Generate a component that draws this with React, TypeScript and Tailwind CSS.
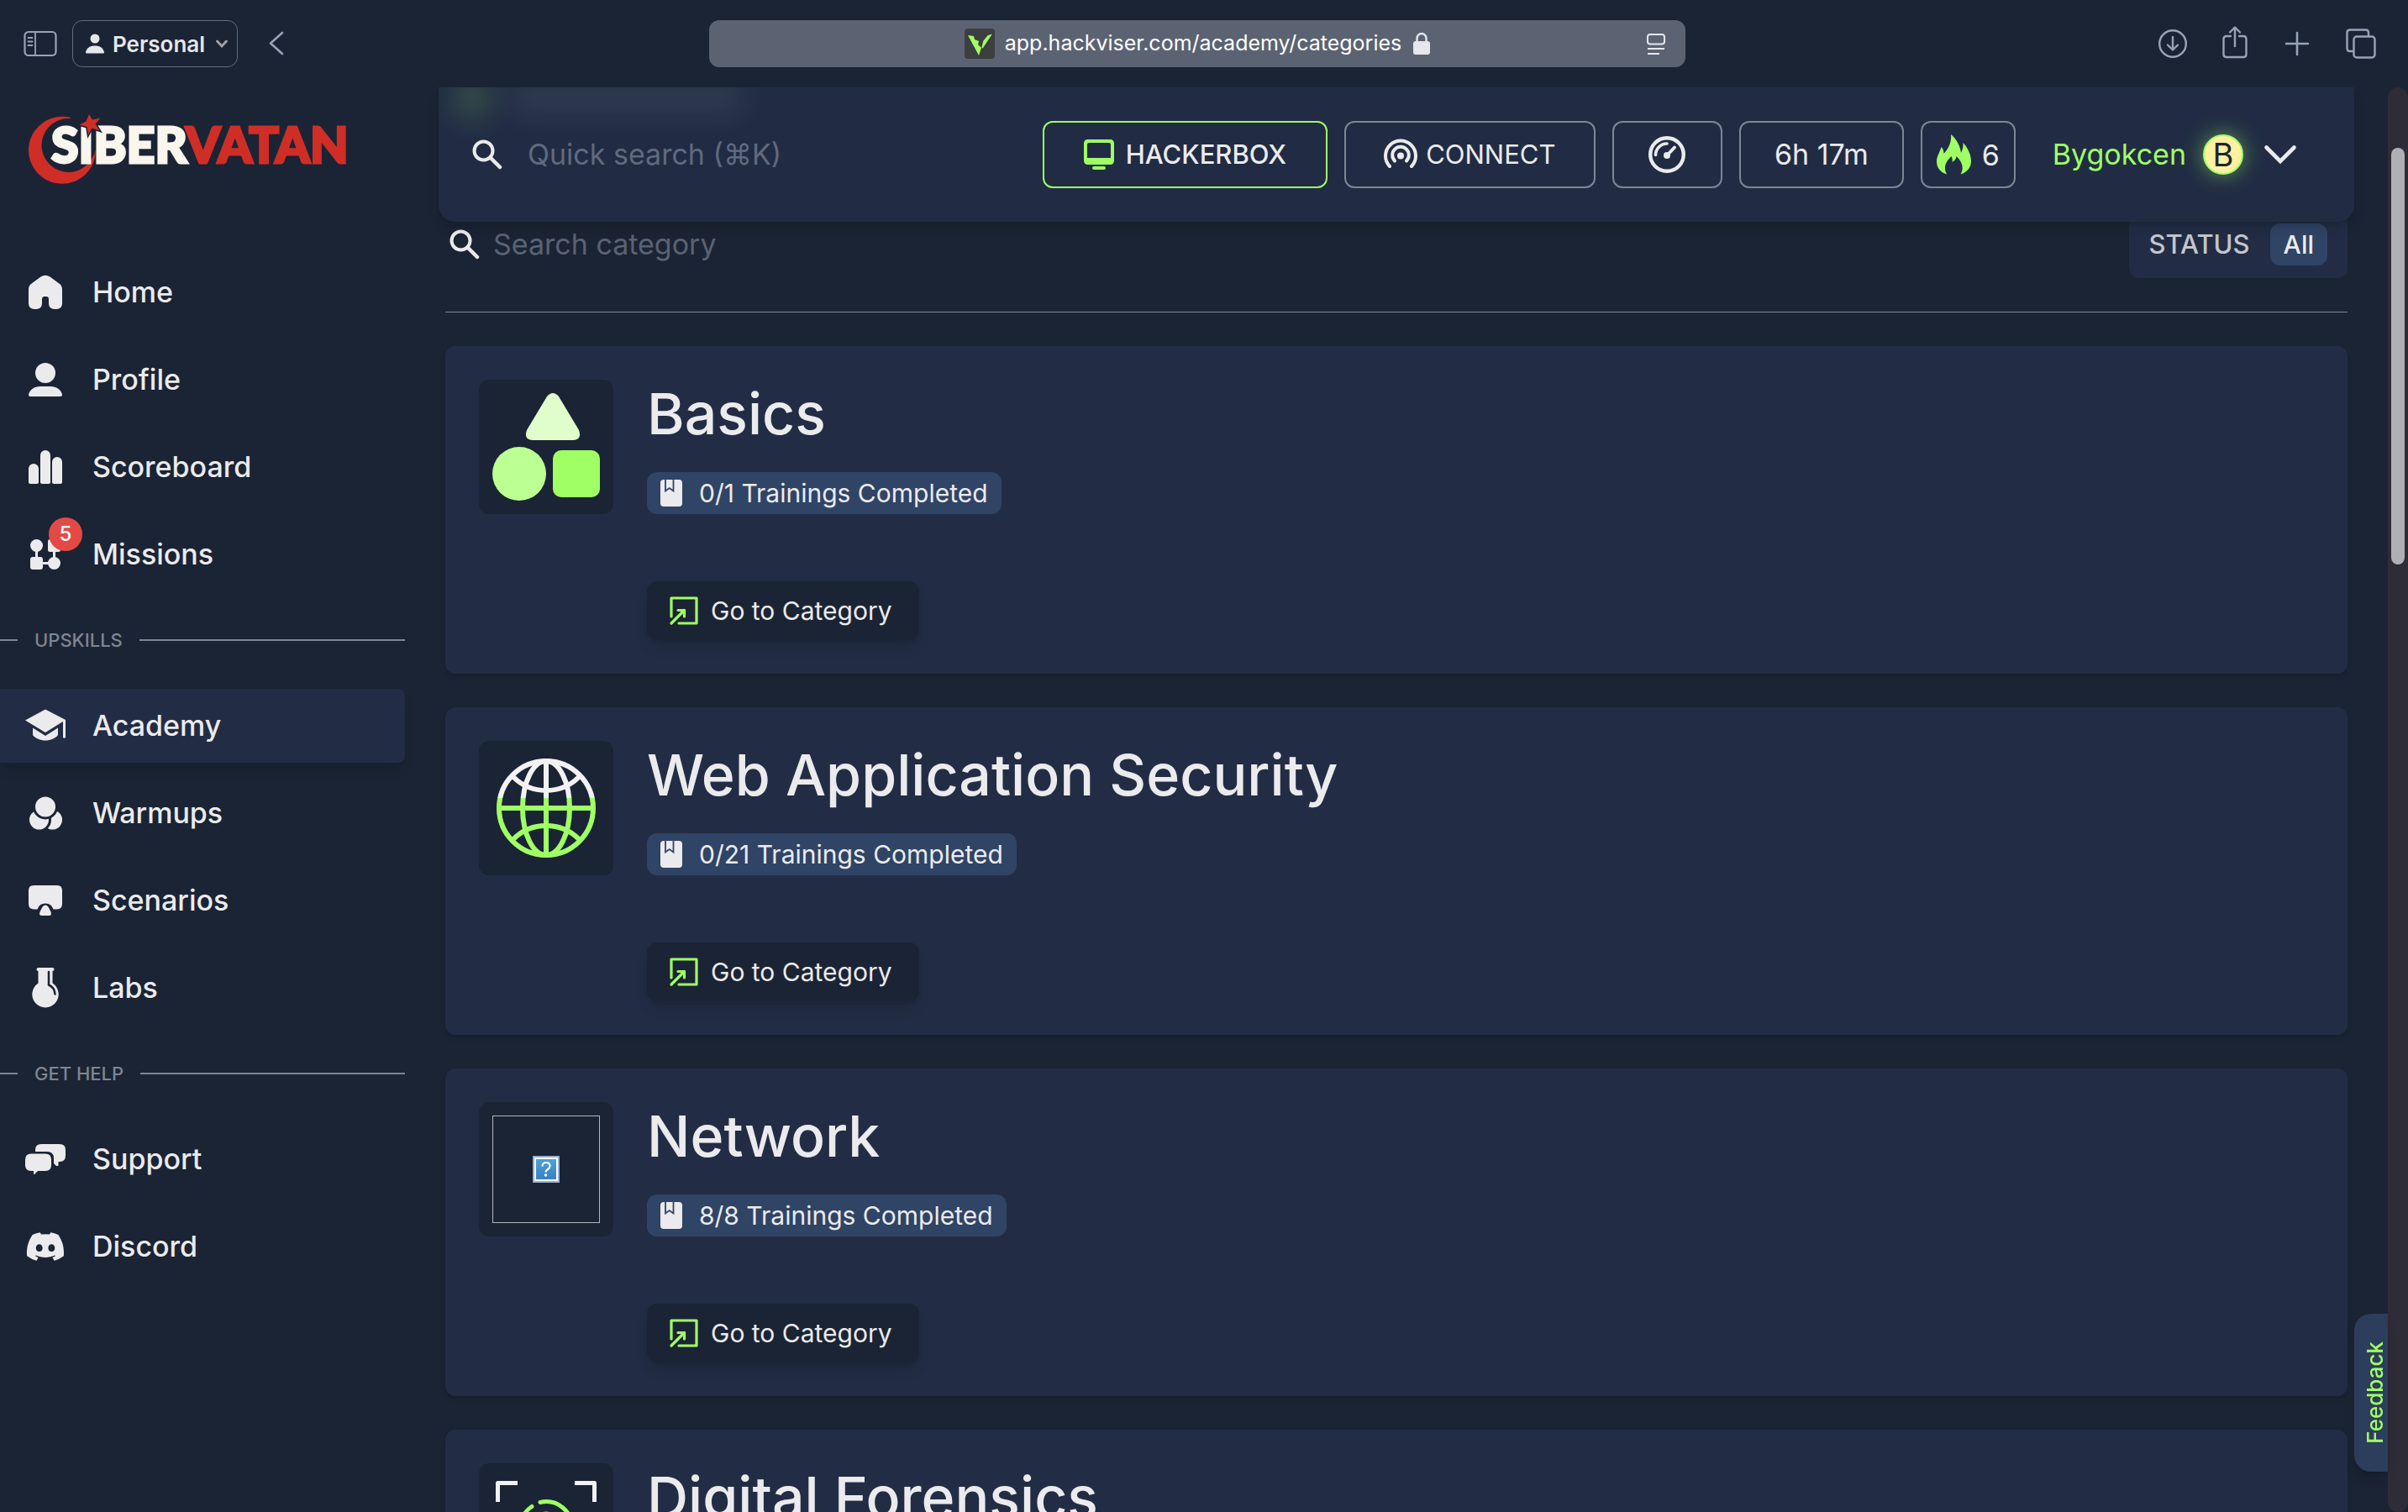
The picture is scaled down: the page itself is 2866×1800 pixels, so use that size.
import type { ReactNode } from "react";
import { FaDiscord } from "react-icons/fa";

const LIGHT = "#ebebed";
const GREEN = "#9fff65";
const BG = "#1b2434";

/* ---------- icons ---------- */

function SearchIcon() {
  return (
    <svg viewBox="0 0 36 36" className="size-9 shrink-0" fill="none" stroke={LIGHT} aria-hidden="true">
      <circle cx="13.5" cy="13.5" r="11" strokeWidth="4" />
      <path d="M21.5 21.5 L33 33" strokeWidth="4.5" strokeLinecap="round" />
    </svg>
  );
}

function NavSvg({ children }: { children: ReactNode }) {
  return (
    <svg viewBox="0 0 48 48" className="size-12" fill={LIGHT} aria-hidden="true">
      {children}
    </svg>
  );
}

const HomeIcon = (
  <NavSvg>
    <path d="M4 20.5q0-4 3-6.5L18.500 5.500q5.500-3.500 11 0L41 14q3 2.500 3 6.500V37q0 7-7 7h-2q-7 0-7-7v-5q0-3-3-3h-2q-3 0-3 3v5q0 7-7 7h-2q-7 0-7-7Z" />
  </NavSvg>
);

const ProfileIcon = (
  <NavSvg>
    <circle cx="24" cy="16" r="12" />
    <path d="M4 42c1-6 7-10 14-10h12c7 0 13 4 14 10q0 2-2 2H6q-2 0-2-2Z" />
  </NavSvg>
);

const ScoreboardIcon = (
  <NavSvg>
    <path d="M4 26a6 6 0 0 1 12 0v16q0 2-2 2H6q-2 0-2-2Z" />
    <path d="M18 10a6 6 0 0 1 12 0v32q0 2-2 2h-8q-2 0-2-2Z" />
    <path d="M32 18a6 6 0 0 1 12 0v24q0 2-2 2h-8q-2 0-2-2Z" />
  </NavSvg>
);

const MissionsIcon = (
  <NavSvg>
    <circle cx="13.5" cy="13.500" r="7.500" />
    <rect x="27" y="6" width="15" height="15" rx="2.500" />
    <rect x="6" y="27" width="15" height="15" rx="3" />
    <circle cx="34.500" cy="34.500" r="7.500" />
    <path d="M12 18h3v12h-3zM33 18h3v12h-3zM18 33h12v3H18z" />
  </NavSvg>
);

const AcademyIcon = (
  <NavSvg>
    <path d="M24 4.500 48 17 24 32 0 17.500Z" />
    <path d="M9 26.500 24 36l15-9.500V35c-3 4-9 6.500-15 6.500S12 39 9 35Z" />
    <path d="M45 17h3v21q-1.500 1.500-3 0Z" />
  </NavSvg>
);

const WarmupsIcon = (
  <NavSvg>
    <circle cx="32.500" cy="32" r="11.500" />
    <circle cx="16.500" cy="32" r="13" stroke={BG} strokeWidth="3" />
    <circle cx="24" cy="16.500" r="13.500" stroke={BG} strokeWidth="3" />
  </NavSvg>
);

const ScenariosIcon = (
  <NavSvg>
    <path d="M10 6h28q6 0 6 6v16q0 6.500-6.500 6.500H33.500a10 10 0 0 0-19 0H10.500Q4 34.500 4 28V12q0-6 6-6Z" />
    <path d="M24 29.500q2.500 0 4 3l2.500 5q1.500 4.500-2 4.500h-9q-3.500 0-2-4.500l2.500-5q1.500-3 4-3Z" />
  </NavSvg>
);

const LabsIcon = (
  <NavSvg>
    <path d="M15.500 0h17q2 0 2 2t-2 2V18.500a15.700 15.700 0 1 1-17 0V4q-2 0-2-2t2-2Z" />
    <path d="M28 5v15.500q7 3 7.500 11" fill="none" stroke={BG} strokeWidth="2.500" strokeLinecap="round" />
  </NavSvg>
);

const SupportIcon = (
  <NavSvg>
    <path d="M19 6h22q7 0 7 7v7q0 7-7 7h-1.500v4.500q-1.500 1-3 0L34 29v-6q0-8-8-8H12v-2q0-7 7-7Z" />
    <path d="M7 17.500h17q7 0 7 7V31q0 7-7 7h-9l-4 4q-1 .5-1-1v-3H7q-7 0-7-7v-6.500q0-7 7-7Z" />
  </NavSvg>
);

const DiscordIcon = <FaDiscord className="size-12 text-[#ebebed]" aria-hidden="true" />;

function BookIcon() {
  return (
    <svg viewBox="0 0 26 32" className="h-8 w-[26px] shrink-0" aria-hidden="true">
      <rect width="26" height="32" rx="4" fill={LIGHT} />
      <path d="M6 0v13.500l4.700-3.500 4.800 3.500V0" fill="none" stroke="#304466" strokeWidth="1.800" />
    </svg>
  );
}

function EnterIcon() {
  return (
    <svg viewBox="0 0 36 36" className="size-9 shrink-0" fill="none" stroke={GREEN} strokeWidth="3.200" strokeLinecap="round" strokeLinejoin="round" aria-hidden="true">
      <path d="M3 25V3h30v30H12" />
      <path d="M3 33 18.500 17.500M11 17.500h7.500V25" />
    </svg>
  );
}

function BasicsArt() {
  return (
    <svg viewBox="0 0 128 128" className="size-32" aria-hidden="true">
      <path d="M65 4q7-8 14 0l24 40q4 12-7 12H48q-11 0-7-12Z" fill="#dffecb" />
      <circle cx="32" cy="96" r="32" fill="#bcff93" />
      <rect x="72" y="68" width="56" height="56" rx="10" fill={GREEN} />
    </svg>
  );
}

function WebArt() {
  return (
    <svg viewBox="0 0 128 128" className="size-32" fill="none" stroke="url(#globe)" strokeWidth="6" aria-hidden="true">
      <defs>
        <linearGradient id="globe" gradientUnits="userSpaceOnUse" x1="0" y1="0" x2="0" y2="128">
          <stop offset="0.410" stopColor="#f2f1f4" />
          <stop offset="0.410" stopColor={GREEN} />
        </linearGradient>
      </defs>
      <circle cx="64" cy="64" r="56" />
      <ellipse cx="64" cy="64" rx="28" ry="56" />
      <path d="M61 8h6v112h-6z" fill="url(#globe)" stroke="none" />
      <path d="M8 61h112v6H8z" fill={GREEN} stroke="none" />
      <path d="M25 27q16 16 39 16t39-16M25 101q16-16 39-16t39 16" />
    </svg>
  );
}

function MissingArt() {
  return (
    <div className="flex size-32 items-center justify-center border border-[#b4b7bd]">
      <svg viewBox="0 0 32 32" className="size-8" aria-hidden="true">
        <defs>
          <linearGradient id="missing" x1="0" y1="0" x2="0" y2="1">
            <stop offset="0" stopColor="#4fa0d6" />
            <stop offset="1" stopColor="#3a80c2" />
          </linearGradient>
        </defs>
        <rect width="32" height="32" fill="#93b0d8" />
        <rect x="2" y="2" width="28" height="28" fill="#fff" />
        <rect x="4" y="4" width="24" height="24" fill="url(#missing)" />
        <path d="M11.500 12.500q0-4.500 4.500-4.500t4.500 4q0 2.500-2.500 4t-2.500 3.500" fill="none" stroke="#fff" strokeWidth="2.200" />
        <circle cx="15.500" cy="23" r="1.700" fill="#fff" />
      </svg>
    </div>
  );
}

function ForensicsArt() {
  return (
    <svg viewBox="0 0 128 128" className="size-32" fill="none" strokeWidth="5" strokeLinecap="round" aria-hidden="true">
      <path d="M30 7.500H6.500V30M98 7.500h23.500V30M6.500 98v23.500H30M121.500 98v23.500H98" stroke="#f2f1f4" strokeLinecap="butt" strokeLinejoin="round" />
      <g stroke={GREEN}>
        <path d="M57 30.500A31 31 0 0 1 95 61v10" />
        <path d="M47 35.500A31 31 0 0 0 33 61v14" />
        <path d="M47 86V61a17 17 0 0 1 34 0v14" />
        <path d="M64 61v34" />
      </g>
    </svg>
  );
}

/* ---------- browser bar ---------- */

function BrowserBar() {
  const chrome = "#98a3b8";
  return (
    <div className="grid h-26 shrink-0 grid-cols-[1fr_minmax(0,1162px)_1fr] items-center pr-4">
      <div className="flex items-center pl-7">
        <button type="button" aria-label="Toggle sidebar">
          <svg viewBox="0 0 40 32" className="h-8 w-10" fill="none" stroke={chrome} strokeWidth="2.200" strokeLinecap="round">
            <rect x="1.500" y="2" width="37" height="28" rx="4.500" />
            <path d="M14 2v28M5.500 9h5M5.500 13.500h5M5.500 18h5" strokeWidth="1.800" />
          </svg>
        </button>
        <button type="button" aria-haspopup="menu" className="ml-[18px] flex h-14 items-center rounded-xl border border-[#666c78] pr-2.5 pl-[15px] text-[26px] font-semibold text-[#e6e7ea]">
          <svg viewBox="0 0 22 24" className="mr-2.5 h-6 w-[22px]" fill="#e6e7ea" aria-hidden="true">
            <circle cx="11" cy="6" r="5.500" />
            <path d="M0 22.500C1 17 5 14.500 11 14.500s10 2.500 11 8q0 1-1 1H1q-1 0-1-1Z" />
          </svg>
          Personal
          <svg viewBox="0 0 16 16" className="ml-3 size-4" fill="none" stroke="#a3a3a6" strokeWidth="2.800" strokeLinecap="round" aria-hidden="true">
            <path d="M2.500 5 8 11l5.500-6" />
          </svg>
        </button>
        <button type="button" aria-label="Back" className="ml-9">
          <svg viewBox="0 0 20 32" className="h-8 w-5" fill="none" stroke={chrome} strokeWidth="2.600" strokeLinecap="round" strokeLinejoin="round">
            <path d="M17 3 3 15.500 17 28" />
          </svg>
        </button>
      </div>

      <div className="relative flex h-14 items-center justify-center rounded-xl bg-[#5b6373] text-[25px] text-white">
        <svg viewBox="0 0 36 36" className="mr-3 size-9" aria-hidden="true">
          <rect width="36" height="36" rx="4" fill="#3d3e3f" />
          <path d="M4 8l13 24 3-9-4-4 1-4-5-2-1-4Z" fill={GREEN} />
          <path d="M31 8 21 23l2-8 5-6Z" fill={GREEN} stroke={GREEN} strokeWidth="1.500" />
        </svg>
        <span>app.hackviser.com/academy/categories</span>
        <svg viewBox="0 0 20 28" className="ml-3.5 h-7 w-5" aria-hidden="true">
          <rect y="11" width="20" height="16" rx="3" fill="#e6e7ea" />
          <path d="M4.500 12V7.500a5.500 5.500 0 0 1 11 0V12" fill="none" stroke="#e6e7ea" strokeWidth="2.400" />
        </svg>
        <button type="button" aria-label="Reader" className="absolute top-4 right-6">
          <svg viewBox="0 0 22 26" className="h-[26px] w-[22px]" fill="none" stroke="#e6e7ea" strokeWidth="2">
            <rect x="1" y="1" width="20" height="11.500" rx="3" />
            <path d="M1 18h20M1 24h14" />
          </svg>
        </button>
      </div>

      <div className="flex items-center justify-end gap-10 pr-[22px]">
        <button type="button" aria-label="Downloads">
          <svg viewBox="0 0 36 36" className="size-9" fill="none" stroke={chrome} strokeWidth="2.400" strokeLinecap="round" strokeLinejoin="round">
            <circle cx="18" cy="18" r="15.800" />
            <path d="M18 10v15M12 19.500l6 6 6-6" />
          </svg>
        </button>
        <button type="button" aria-label="Share">
          <svg viewBox="0 0 32 40" className="mb-1 h-10 w-8" fill="none" stroke={chrome} strokeWidth="2.400" strokeLinecap="round" strokeLinejoin="round">
            <path d="M11 13H6q-3.500 0-3.500 3.500v18Q2.500 38 6 38h20q3.500 0 3.500-3.500v-18Q29.500 13 26 13h-5" />
            <path d="M16 25V3M10 8.500 16 2.500l6 6" />
          </svg>
        </button>
        <button type="button" aria-label="New tab">
          <svg viewBox="0 0 36 36" className="size-9" fill="none" stroke={chrome} strokeWidth="2.600" strokeLinecap="round">
            <path d="M18 5v26M5 18h26" />
          </svg>
        </button>
        <button type="button" aria-label="Tab overview">
          <svg viewBox="0 0 36 36" className="size-9" fill="none" stroke={chrome} strokeWidth="2.400" strokeLinejoin="round">
            <rect x="9.500" y="9.500" width="25" height="25" rx="3.500" />
            <path d="M9.500 27H5q-3.500 0-3.500-3.500V5Q1.500 1.500 5 1.500h18.500Q27 1.500 27 5v4.500" />
          </svg>
        </button>
      </div>
    </div>
  );
}

/* ---------- sidebar ---------- */

type NavItem = { label: string; icon: ReactNode; active?: boolean; badge?: string };

const mainItems: NavItem[] = [
  { label: "Home", icon: HomeIcon },
  { label: "Profile", icon: ProfileIcon },
  { label: "Scoreboard", icon: ScoreboardIcon },
  { label: "Missions", icon: MissionsIcon, badge: "5" },
];
const upskillItems: NavItem[] = [
  { label: "Academy", icon: AcademyIcon, active: true },
  { label: "Warmups", icon: WarmupsIcon },
  { label: "Scenarios", icon: ScenariosIcon },
  { label: "Labs", icon: LabsIcon },
];
const helpItems: NavItem[] = [
  { label: "Support", icon: SupportIcon },
  { label: "Discord", icon: DiscordIcon },
];

function NavList({ items }: { items: NavItem[] }) {
  return (
    <ul className="flex flex-col gap-4">
      {items.map((item) => (
        <li key={item.label}>
          <a
            href="#"
            aria-current={item.active ? "page" : undefined}
            className={
              item.active
                ? "flex h-22 items-center gap-8 rounded-r-lg bg-[#222d45] pl-[30px] shadow-lg shadow-black/10"
                : "flex h-22 items-center gap-8 pl-[30px]"
            }
          >
            <span className="relative">
              {item.icon}
              {item.badge && (
                <span className="absolute -top-5 left-7 flex size-10 items-center justify-center rounded-full bg-[#e34a45] text-2xl font-medium text-white">
                  {item.badge}
                </span>
              )}
            </span>
            <span className="pb-0.5 text-[34px] font-medium">{item.label}</span>
          </a>
        </li>
      ))}
    </ul>
  );
}

function SectionLabel({ children }: { children: ReactNode }) {
  return (
    <div className="flex h-[116px] items-center text-[22px] text-[#7f8591]">
      <span className="h-0.5 w-[21px] bg-[#7f8591]" />
      <h2 className="px-5 font-medium">{children}</h2>
      <span className="h-0.5 flex-1 bg-[#7f8591]" />
    </div>
  );
}

function Logo() {
  return (
    <svg viewBox="0 0 400 84" className="h-[84px] w-[400px]" role="img" aria-label="Siber Vatan">
      <path d="M50 4a40 40 0 1 0 30 38.500c-1 3-2 6-4 9A32 32 0 1 1 50 5Z" fill="#cf2e27" />
      <g fontFamily="Lato, sans-serif" fontWeight="900" fontSize="59" strokeWidth="3">
        <text x="27" y="58" fill="#f9f6ee" stroke="#f9f6ee">SIBER</text>
        <text x="187" y="58" fill="#cf2e27" stroke="#cf2e27">VATAN</text>
      </g>
      <path d="M72 0 76 6.500 85.500 4.500 79.500 11.500 84.500 19.500 75.500 16.500 71 24.500 69.500 15 60.500 12.500 68.500 8.500Z" fill="#cf2e27" stroke={BG} strokeWidth="3" paintOrder="stroke" />
    </svg>
  );
}

function Sidebar() {
  return (
    <aside className="w-[482px] shrink-0">
      <a href="#" className="block pt-8 pb-[84px] pl-[34px]">
        <Logo />
      </a>
      <nav>
        <NavList items={mainItems} />
        <SectionLabel>UPSKILLS</SectionLabel>
        <NavList items={upskillItems} />
        <SectionLabel>GET HELP</SectionLabel>
        <NavList items={helpItems} />
      </nav>
    </aside>
  );
}

/* ---------- header ---------- */

function Header() {
  return (
    <header className="relative z-10 -mx-2 flex h-40 shrink-0 items-center gap-5 overflow-hidden rounded-b-[20px] bg-[#212c44] px-10 shadow-lg shadow-black/15">
      <span className="absolute -top-4 left-4 h-14 w-12 rounded-full bg-[#9fff65]/15 blur-lg" />
      <span className="absolute -top-3 left-20 h-12 w-72 rounded-full bg-white/6 blur-lg" />
      <label className="flex flex-1 items-center gap-[30px]">
        <SearchIcon />
        <input
          type="search"
          aria-label="Quick search"
          placeholder="Quick search (⌘K)"
          className="w-full bg-transparent pb-0.5 text-[34px] outline-none placeholder:text-[#606a7d]"
        />
      </label>
      <button type="button" className="flex h-20 w-[339px] items-center justify-center gap-3.5 rounded-xl border-2 border-[#9fff65] text-[31px] font-medium">
        <svg viewBox="0 0 36 36" className="size-9" aria-hidden="true">
          <path fillRule="evenodd" d="M5 0h26q5 0 5 5v20q0 5-5 5H5q-5 0-5-5V5q0-5 5-5Zm1 4Q4 4 4 6v16h28V6q0-2-2-2Z" fill={GREEN} />
          <rect x="10" y="32" width="16" height="4" rx="2" fill={GREEN} />
        </svg>
        HACKERBOX
      </button>
      <button type="button" className="flex h-20 w-[299px] items-center justify-center gap-2.5 rounded-xl border-2 border-[#7f8694] text-[31px]">
        <svg viewBox="0 0 40 40" className="size-10" fill="none" stroke={LIGHT} strokeWidth="4" strokeLinecap="round" aria-hidden="true">
          <path d="M7 34a18 18 0 1 1 26 0" />
          <path d="M13 27.500a9.800 9.800 0 1 1 14 0" />
          <circle cx="20" cy="21.500" r="4" fill={LIGHT} stroke="none" />
        </svg>
        CONNECT
      </button>
      <button type="button" aria-label="Speed" className="flex h-20 w-[131px] items-center justify-center rounded-xl border-2 border-[#7f8694]">
        <svg viewBox="0 0 44 44" className="size-11" fill="none" stroke={LIGHT} strokeLinecap="round" aria-hidden="true">
          <circle cx="22" cy="22" r="19.800" strokeWidth="4.400" />
          <path d="M8.500 22.500A13.500 13.500 0 0 1 22 9" strokeWidth="3.600" />
          <circle cx="22" cy="23" r="4" fill={LIGHT} stroke="none" />
          <path d="M22.500 22.500 31 13.500" strokeWidth="4" />
        </svg>
      </button>
      <button type="button" className="h-20 w-[196px] rounded-xl border-2 border-[#7f8694] pb-0.5 text-[34px]">6h 17m</button>
      <button type="button" className="flex h-20 w-[113px] items-center justify-center gap-3 rounded-xl border-2 border-[#7f8694] text-[34px]">
        <svg viewBox="0 0 42 48" className="h-12 w-[42px]" fill={GREEN} aria-hidden="true">
          <path d="M17 0c7 6 11 14 12 22 2-4 3-8 2.500-12C37 16 41 24 41 32c0 8-5 13-12.500 15.500C32 42 32 34 23.500 26c0 3-2 5-5 7 .5-2 0-5-1-7C10 33 8 40 12 47.500 4.500 45 0 40 0 32c0-6 4-11 5.500-17C8 17 8.500 20 8.500 23 14 17 18 9 17 0Z" />
        </svg>
        6
      </button>
      <button type="button" aria-haspopup="menu" className="flex h-20 items-center pr-7 pl-6 text-[34px] text-[#9fff65]">
        <span className="pb-0.5">Bygokcen</span>
        <span className="ml-5 flex size-12 items-center justify-center rounded-full border-2 border-[#9fff65] bg-[#fff1a0] text-[38px] leading-none text-[#1b2434] shadow-[0_0_24px_#9fff6580]">
          B
        </span>
        <svg viewBox="0 0 40 24" className="ml-6 h-6 w-10" fill="none" stroke={LIGHT} strokeWidth="4.600" strokeLinecap="round" aria-hidden="true">
          <path d="M3.500 3.500 20 20 36.500 3.500" />
        </svg>
      </button>
    </header>
  );
}

/* ---------- content ---------- */

const categories = [
  { title: "Basics", progress: "0/1 Trainings Completed", art: <BasicsArt /> },
  { title: "Web Application Security", progress: "0/21 Trainings Completed", art: <WebArt /> },
  { title: "Network", progress: "8/8 Trainings Completed", art: <MissingArt /> },
  { title: "Digital Forensics", progress: "0/9 Trainings Completed", art: <ForensicsArt /> },
];

function CategoryCard({ title, progress, art }: (typeof categories)[number]) {
  return (
    <article className="flex shrink-0 gap-10 rounded-xl bg-[#222d45] p-10 shadow-md shadow-black/10">
      <div className="flex size-40 shrink-0 items-center justify-center rounded-xl bg-[#1b2434]">{art}</div>
      <div className="flex flex-col items-start">
        <h3 className="text-[68px] leading-20 font-medium">{title}</h3>
        <p className="mt-[30px] flex h-[50px] items-center gap-5 rounded-xl bg-[#304466] px-4 text-[30px]">
          <BookIcon />
          {progress}
        </p>
        <button type="button" className="mt-20 flex h-[70px] items-center gap-3.5 rounded-xl bg-[#1b2434] pr-8 pl-[26px] text-[30px] shadow-lg shadow-black/15">
          <EnterIcon />
          Go to Category
        </button>
      </div>
    </article>
  );
}

function Toolbar() {
  return (
    <div className="-mt-[13px] flex h-20 shrink-0 items-center justify-between">
      <label className="flex flex-1 items-center gap-4 pl-[5px]">
        <SearchIcon />
        <input
          type="search"
          aria-label="Search category"
          placeholder="Search category"
          className="w-full bg-transparent pb-0.5 text-[34px] outline-none placeholder:text-[#5a6273]"
        />
      </label>
      <div className="flex h-20 items-center gap-6 rounded-xl bg-[#222d45] px-6 text-[31px] font-medium text-[#c4c6cc]">
        <span id="status-label">STATUS</span>
        <button type="button" aria-describedby="status-label" className="h-[50px] rounded-xl bg-[#304466] px-4 text-[30px] text-[#ebebed]">
          All
        </button>
      </div>
    </div>
  );
}

export default function App() {
  return (
    <div className="relative flex h-screen flex-col overflow-hidden bg-[#1b2434] font-['Inter','DejaVu_Sans',sans-serif] text-[#ebebed]">
      <BrowserBar />
      <div className="flex min-h-0 flex-1">
        <Sidebar />
        <main className="flex min-w-0 flex-1 flex-col overflow-hidden px-12">
          <Header />
          <Toolbar />
          <hr className="mt-10 shrink-0 border-[#7f8591]" />
          <div className="mt-10 flex flex-col gap-10">
            {categories.map((category) => (
              <CategoryCard key={category.title} {...category} />
            ))}
          </div>
        </main>
        <div className="w-6 shrink-0 rounded-full bg-[#2e2c37] px-1 pt-18" aria-hidden="true">
          <div className="h-[496px] rounded-full bg-[#b0b0b4]" />
        </div>
      </div>
      <button type="button" className="absolute right-6 bottom-12 flex h-[188px] w-10 items-center justify-center rounded-l-[20px] bg-[#2d3d5c] pl-2 text-[26px] font-medium text-[#9fff65] shadow-lg shadow-black/20">
        <span className="rotate-180 [writing-mode:vertical-rl]">Feedback</span>
      </button>
    </div>
  );
}
